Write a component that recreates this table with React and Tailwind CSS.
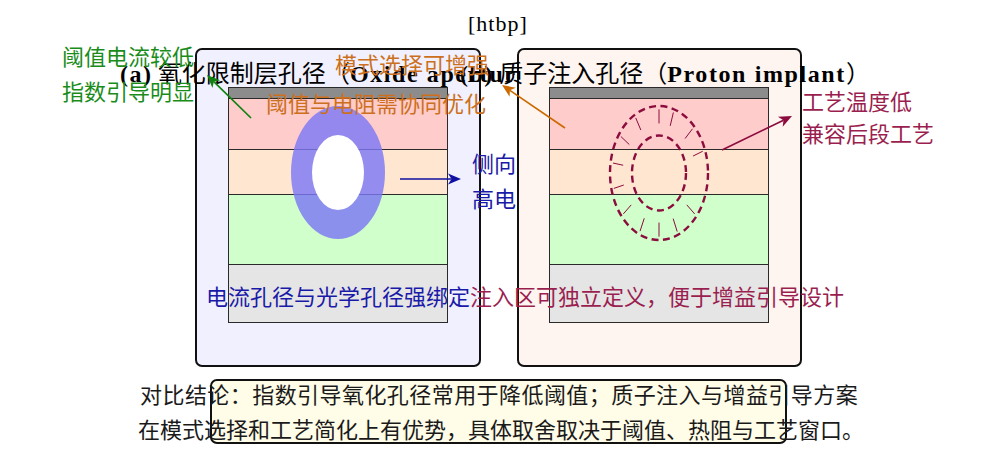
import React from 'react';

const cjk = "font-['Noto_Sans_CJK_SC',sans-serif]";
const serif = "font-['Liberation_Serif','Noto_Sans_CJK_SC',serif]";

// layer stack of the device cross-section (same for both panels)
const Stack = ({ children }) => (
  <div className="relative flex h-[236px] w-[220px] flex-col">
    <div className="h-[12px] border border-[#2a2a2a] bg-[#8c8c8c]" />
    <div className="h-[51px] border border-t-0 border-[#2a2a2a] bg-[#ffcccc]" />
    <div className="h-[45px] border border-t-0 border-[#2a2a2a] bg-[#ffe6d0]" />
    <div className="h-[70px] border border-t-0 border-[#2a2a2a] bg-[#d0ffcc]" />
    <div className="h-[58px] border border-t-0 border-[#2a2a2a] bg-[#e5e5e5]" />
    {children}
  </div>
);

// annotation: one or more lines of coloured text, stacked
const Note = ({ className, lines, gap = 'gap-[13px]' }) => (
  <div className={`absolute flex flex-col whitespace-nowrap text-[22px] leading-none ${gap} ${cjk} ${className}`}>
    {lines.map((l) => (
      <span key={l}>{l}</span>
    ))}
  </div>
);

const Title = ({ className, tag, zh, en }) => (
  <div className={`absolute whitespace-nowrap text-[24px] leading-none ${className}`}>
    <span className={`font-bold tracking-[1.5px] ${serif}`}>{tag}</span>
    <span className={cjk}> {zh}（</span>
    <span className={`font-bold tracking-[1.6px] ${serif}`}>{en}</span>
    <span className={cjk}>）</span>
  </div>
);

const Arrow = ({ x1, y1, x2, y2, color }) => {
  const dx = x2 - x1;
  const dy = y2 - y1;
  const len = Math.hypot(dx, dy);
  const ux = dx / len;
  const uy = dy / len;
  const hl = 13;
  const hw = 5.5;
  const bx = x2 - ux * hl;
  const by = y2 - uy * hl;
  const nx = bx + ux * 3.5;
  const ny = by + uy * 3.5;
  const pts = `${x2},${y2} ${bx - uy * hw},${by + ux * hw} ${nx},${ny} ${bx + uy * hw},${by - ux * hw}`;
  return (
    <g>
      <line x1={x1} y1={y1} x2={nx} y2={ny} stroke={color} strokeWidth="1.7" />
      <polygon points={pts} fill={color} />
    </g>
  );
};

// implant ticks between the two dashed rings, angles read off the figure
const tickAngles = [-171, -145, -120, -90, -72, -44, -20, 40, 67, 90, 114, 140, 166];

const App = () => {
  return (
    <div className="relative h-[460px] w-[998px] overflow-hidden bg-white text-black">
      <span className={`absolute left-[468px] top-[13px] text-[22px] leading-none tracking-[1px] ${serif}`}>[htbp]</span>

      <div className="absolute left-[195px] top-[48px] flex gap-[36px]">
        {/* LEFT: oxide aperture */}
        <div className="relative h-[319px] w-[286px] rounded-[7px] border-2 border-[#111] bg-[#f0f0fe] pl-[31px] pt-[37px]">
          <Stack>
            <svg className="absolute inset-0" width="220" height="236" viewBox="0 0 220 236">
              <ellipse cx="110" cy="85.5" rx="47" ry="66.5" fill="#7c78f4" fillOpacity="0.82" />
              <ellipse cx="110" cy="85.5" rx="26" ry="37.5" fill="#fff" />
            </svg>
          </Stack>
          <Title className="left-[-77px] top-[10px]" tag="(a)" zh="氧化限制层孔径" en="Oxide aperture" />
          <Note className="left-[-135px] top-[-6px] text-[#1a8c1a]" lines={['阈值电流较低', '指数引导明显']} />
          <Note className="left-[275px] top-[101px] text-[#1a1aa8]" lines={['侧向漏电', '高电阻']} />
          <Note className="left-[9px] top-[234px] text-[#1a1aa8]" lines={['电流孔径与光学孔径强绑定']} />
        </div>

        {/* RIGHT: proton implant */}
        <div className="relative h-[319px] w-[285px] rounded-[7px] border-2 border-[#111] bg-[#fff5f0] pl-[30px] pt-[37px]">
          <Stack>
            <svg className="absolute inset-0" width="220" height="236" viewBox="0 0 220 236">
              <ellipse cx="110" cy="86" rx="49" ry="67" fill="none" stroke="#8c0c3e" strokeWidth="2.4" strokeDasharray="7 4.5" />
              <ellipse cx="110" cy="86" rx="27" ry="37.5" fill="none" stroke="#8c0c3e" strokeWidth="2.4" strokeDasharray="7 4.5" />
              {tickAngles.map((a) => {
                const t = (a * Math.PI) / 180;
                return (
                  <line
                    key={a}
                    x1={110 + 49 * 0.74 * Math.cos(t)}
                    y1={86 + 67 * 0.74 * Math.sin(t)}
                    x2={110 + 49 * 0.95 * Math.cos(t)}
                    y2={86 + 67 * 0.95 * Math.sin(t)}
                    stroke="#8c0c3e"
                    strokeWidth="1"
                  />
                );
              })}
            </svg>
          </Stack>
          <Title className="left-[-59px] top-[10px]" tag="(b)" zh="质子注入孔径" en="Proton implant" />
          <Note className="left-[-184px] top-[2px] text-[#cc7020]" lines={['模式选择可增强']} />
          <Note className="left-[-253px] top-[41px] text-[#cc7020]" lines={['阈值与电阻需协同优化']} />
          <Note className="left-[283px] top-[39px] text-[#9a1f50]" gap="gap-[10px]" lines={['工艺温度低', '兼容后段工艺']} />
          <Note className="left-[-49px] top-[234px] text-[#9a1f50]" lines={['注入区可独立定义，便于增益引导设计']} />
        </div>
      </div>

      <svg className="pointer-events-none absolute inset-0" width="998" height="460" viewBox="0 0 998 460">
        <Arrow x1={251} y1={118} x2={207} y2={75} color="#108010" />
        <Arrow x1={400} y1={179} x2={461} y2={179} color="#1010a0" />
        <Arrow x1={565} y1={128} x2={502} y2={85} color="#cc6a00" />
        <Arrow x1={722} y1={150} x2={792} y2={116} color="#8c0c3e" />
      </svg>

      {/* conclusion */}
      <div className="absolute left-[210px] top-[379px] h-[65px] w-[577px] rounded-[7px] border-2 border-[#111] bg-[#fffce8]" />
      <div className={`absolute left-[138px] top-[382px] flex flex-col gap-[13px] whitespace-nowrap text-[22px] leading-none text-[#1a1a1a] ${cjk}`}>
        <span className="pl-[2px] tracking-[0.44px]">对比结论：指数引导氧化孔径常用于降低阈值；质子注入与增益引导方案</span>
        <span>在模式选择和工艺简化上有优势，具体取舍取决于阈值、热阻与工艺窗口。</span>
      </div>
    </div>
  );
};

export default App;
